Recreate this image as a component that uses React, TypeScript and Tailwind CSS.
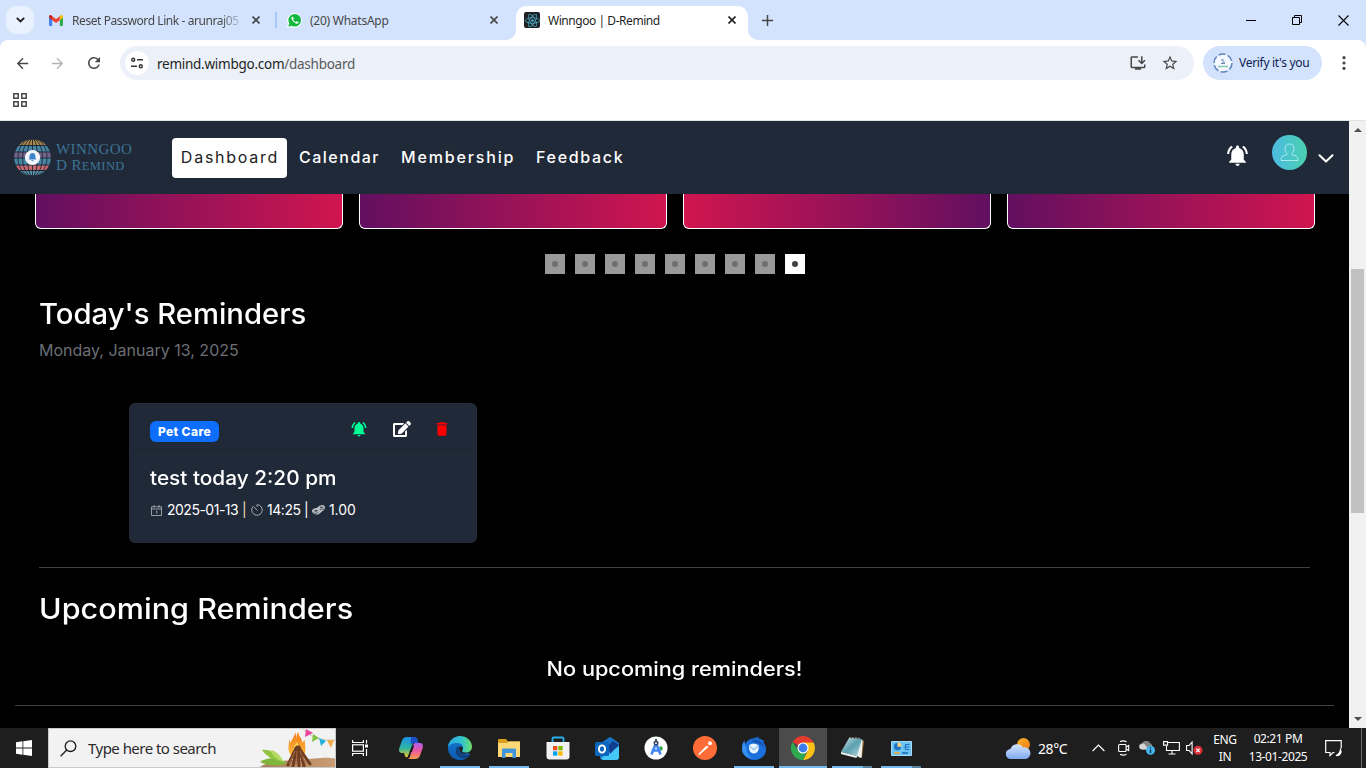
import React from "react";
import {
  MdArrowBack,
  MdArrowForward,
  MdDelete,
  MdInstallDesktop,
  MdNotificationsActive,
  MdRefresh,
  MdStarOutline,
} from "react-icons/md";
import { FaEdit, FaReact } from "react-icons/fa";

/* ---------- small drawings ---------- */

function Cross({ className = "" }: { className?: string }) {
  return (
    <svg className={className} width="8" height="8" viewBox="0 0 8 8" fill="none" stroke="currentColor" strokeWidth="1.6">
      <path d="M0.5 0.5L7.5 7.5M7.5 0.5L0.5 7.5" />
    </svg>
  );
}

function GmailIcon() {
  return (
    <svg width="14" height="11" viewBox="0 0 14 11">
      <path d="M0 2V10a1 1 0 0 0 1 1h2.2V4.5z" fill="#4285f4" />
      <path d="M14 2V10a1 1 0 0 1-1 1h-2.2V4.5z" fill="#34a853" />
      <path d="M10.8 1.2V5.2L14 2.8V1.6C14 .3 12.500-.4 11.500.4z" fill="#fbbc04" />
      <path d="M3.200 5.200V1.200L7 4.100l3.800-2.900v4L7 8z" fill="#ea4335" />
      <path d="M0 1.600V2.800l3.200 2.400V1.200L2.500.4C1.500-.4 0 .3 0 1.600z" fill="#c5221f" />
    </svg>
  );
}

function GlobeLogo() {
  const rows = [
    { y: 0.5, h: 5.5, c: "#b08a4a" },
    { y: 7, h: 5.5, c: "#4686a3" },
    { y: 13.500, h: 5, c: "#77648c" },
    { y: 19.500, h: 6, c: "#4686a3" },
    { y: 26.500, h: 4.5, c: "#c9686f" },
    { y: 32, h: 4.5, c: "#5b93ab" },
  ];
  return (
    <svg width="37" height="37" viewBox="0 0 37 37">
      <defs>
        <clipPath id="globe">
          <circle cx="18.500" cy="18.500" r="18.300" />
        </clipPath>
      </defs>
      <g clipPath="url(#globe)">
        {rows.map((r) => (
          <rect key={r.y} x="0" y={r.y} width="37" height={r.h} fill={r.c} />
        ))}
        <g fill="none" stroke="#202938" strokeWidth=".9">
          <path d="M18.500 0v37" />
          <ellipse cx="18.500" cy="18.500" rx="5" ry="19" />
          <ellipse cx="18.500" cy="18.500" rx="10" ry="19" />
          <ellipse cx="18.500" cy="18.500" rx="14.500" ry="19" />
        </g>
      </g>
      <circle cx="18.500" cy="18.500" r="7.600" fill="#f3f6fa" />
      <path d="M18.500 14c-2 0-2.900 1.500-2.900 3.200 0 2-.5 2.600-1 3.400h7.800c-.5-.8-1-1.400-1-3.400 0-1.700-.9-3.200-2.900-3.200zM17.300 21.300h2.400c0 1.400-2.400 1.400-2.400 0z" fill="#3b86cc" />
    </svg>
  );
}

function Campfire() {
  return (
    <svg width="78" height="40" viewBox="0 0 78 40">
      <defs>
        <linearGradient id="sand" x1="0" x2="1">
          <stop offset="0" stopColor="#a97f5c" />
          <stop offset="1" stopColor="#c99c72" />
        </linearGradient>
        <linearGradient id="flame" x1="0" y1="0" x2="0" y2="1">
          <stop offset="0" stopColor="#f37a1c" />
          <stop offset="1" stopColor="#fdc13a" />
        </linearGradient>
      </defs>
      <path d="M0 40c6-5 14-7 24-8l40-3c6-.4 10 0 14 .5V40z" fill="url(#sand)" />
      <path d="M39 3c-3 6-4 8-6 11 0-2-.5-3-1-4 .5 5-2 9 1 15l4 4h7l4-5c1-5 0-9-.500-13l-2.500 3c1-5-4-6-3.500-11-2 2-2 4-2 6-.7-2-1-4-.5-6z" fill="url(#flame)" />
      <path d="M40 13c-2 4-5 6-4 11h8c2-4-3-6-4-11z" fill="#ffdd55" />
      <path d="M39 19l-8 17M40 18l-4 19M41 19l1 18M42 18l5 19M42 19l11 16" stroke="#6e3d22" strokeWidth="3" strokeLinecap="round" />
      <path d="M38 22l-6 13M40 22l-1 14M43 22l6 14" stroke="#a5653a" strokeWidth="1.100" />
      <path d="M3 33c8-5 17-5 27 1-10 4-19 3-27-1z" fill="#7fb53a" />
      <path d="M5 21c8-1 16 4 21 12C16 31 10 28 5 21z" fill="#8fc442" />
      <path d="M14 21c5 1 9 5 13 12-8-3-12-6-13-12z" fill="#b4db62" />
      <path d="M46 0c8 9 19 12 32 11" fill="none" stroke="#b9a9a0" strokeWidth=".7" />
      <path d="M49 0l7 4-8 4z" fill="#e8459c" />
      <path d="M56 5l6 4-7 4z" fill="#83c440" />
      <path d="M62 9l7 3-5 5z" fill="#24b1dd" />
      <path d="M70 11h7l-3 8z" fill="#f2ac4e" />
    </svg>
  );
}

function Search() {
  return (
    <svg width="17" height="17" viewBox="0 0 17 17" fill="none" stroke="#1c1c1c" strokeWidth="1.300">
      <circle cx="10.500" cy="6.200" r="5.300" />
      <path d="M6.700 10L.6 16.300" />
    </svg>
  );
}

function TaskView() {
  return (
    <svg width="17" height="16" viewBox="0 0 17 16" fill="none" stroke="#fff" strokeWidth="1.200">
      <path d="M.6 0v2.500h10.800V0M.6 16v-2.500h10.800V16M14.500 0v3.500M14.500 9v7" />
      <rect x=".6" y="4.800" width="10.800" height="6.400" />
      <rect x="13" y="4.500" width="3" height="3" fill="#fff" stroke="none" />
    </svg>
  );
}

function Copilot() {
  return (
    <svg width="24" height="22" viewBox="0 0 24 22">
      <defs>
        <linearGradient id="cpA" x1="0" y1="0" x2="0" y2="1">
          <stop offset="0" stopColor="#1c8fe8" />
          <stop offset=".55" stopColor="#2fb6a0" />
          <stop offset="1" stopColor="#f4c626" />
        </linearGradient>
        <linearGradient id="cpB" x1="0" y1="0" x2="0" y2="1">
          <stop offset="0" stopColor="#b05cf0" />
          <stop offset=".5" stopColor="#ee5a9b" />
          <stop offset="1" stopColor="#fb9a4b" />
        </linearGradient>
      </defs>
      <path d="M8 0h7c2 0 3 1 3.500 3l.8 3H14L9 19C8.500 20.500 7 21 6 19l-1-3H3c-3 0-3.500-2.500-2.500-5.500L3 3.500C4 1 5.500 0 8 0z" fill="url(#cpA)" />
      <path d="M12 0h3c2 0 3 1 3.500 3l.8 3H14c-1.500 0-2 1-2.500 2L12 0z" fill="#1b50c8" />
      <path d="M16 6h5c3 0 3.500 2.500 2.500 5.500L21 18.500C20 21 18.500 22 16 22H8.500c1.500 0 2-1 2.500-2.500L14 9c.4-2 1-3 2-3z" fill="url(#cpB)" />
      <path d="M13.500 8L10.500 15h2.500l2-6z" fill="#1e1e1e" />
    </svg>
  );
}

function Edge() {
  return (
    <svg width="24" height="24" viewBox="0 0 24 24">
      <defs>
        <linearGradient id="edA" x1="0" x2="1">
          <stop offset="0" stopColor="#2aa7e6" />
          <stop offset=".6" stopColor="#34c5c8" />
          <stop offset="1" stopColor="#6be06a" />
        </linearGradient>
        <linearGradient id="edB" x1="0" y1="0" x2="0" y2="1">
          <stop offset="0" stopColor="#1378cf" />
          <stop offset="1" stopColor="#0d59ad" />
        </linearGradient>
      </defs>
      <path d="M0 12C0 5 5 2 12 2l4 8-1 6 7.500 2A12 12 0 0 1 0 12z" fill="url(#edB)" />
      <path d="M0 12C0 5 5.500 0 12 0s12 5 12 10.500c0 4-3 6-6 6-2.500 0-4-.8-4-1.700 0-.7 1-1 1-3C15 9 12.500 7 9 7 4 7 0 9.500 0 12z" fill="url(#edA)" />
      <path d="M9 11c-3 5 0 11 7 11 3 0 5-2 6.500-4-4 2-9 1.500-11-1.500-1.500-2-1-4 0-5.500-1-.5-2-.5-2.500 0z" fill="#123e78" />
      <path d="M11.500 11c1.500-1 3.500 0 3.500 1.200 0 1-1 1.800-1 2.800 0 1.500 2 2.500 5 2.500-4 2-9-1-7.500-6.500z" fill="#1e1e1e" />
    </svg>
  );
}

function Explorer() {
  return (
    <svg width="22" height="19" viewBox="0 0 22 19">
      <path d="M0 1a1 1 0 0 1 1-1h7l2 2.500h12V18H0z" fill="#dd9e1b" />
      <path d="M0 4h9l1.500-1.500H22V18H0z" fill="#ffd977" />
      <path d="M4 10.500a1 1 0 0 1 1-1h12a1 1 0 0 1 1 1V19h-3.500v-5h-7v5H4z" fill="#4095dc" />
    </svg>
  );
}

function Store() {
  return (
    <svg width="24" height="24" viewBox="0 0 24 24">
      <path d="M6.500 7V2.500a1 1 0 0 1 1-1h9a1 1 0 0 1 1 1V7" fill="none" stroke="#27b0e8" strokeWidth="1.800" />
      <path d="M.5 6h23v14.500a3 3 0 0 1-3 3h-17a3 3 0 0 1-3-3z" fill="#f1f1f1" />
      <path d="M7 10h4.300v4.300H7z" fill="#f25022" />
      <path d="M12.300 10h4.300v4.300h-4.300z" fill="#7fba00" />
      <path d="M7 15.300h4.300v4.300H7z" fill="#00a4ef" />
      <path d="M12.300 15.300h4.300v4.300h-4.300z" fill="#ffb900" />
    </svg>
  );
}

function Outlook() {
  return (
    <svg width="24" height="23" viewBox="0 0 24 23">
      <path d="M5 6.500L14 .5c.7-.5 1.500-.5 2.200 0L24 6v14a3 3 0 0 1-3 3H8a3 3 0 0 1-3-3z" fill="#1773c5" />
      <path d="M24 9v11a3 3 0 0 1-3 3H8l-2-2z" fill="#43c8f7" />
      <path d="M13 9l5-5 6 4-9 9z" fill="#103f91" />
      <rect x="0" y="5" width="14" height="14" rx="1.500" fill="#0c65bf" />
      <ellipse cx="7" cy="12" rx="3.100" ry="3.600" fill="none" stroke="#fff" strokeWidth="1.900" />
    </svg>
  );
}

function AndroidStudio() {
  return (
    <svg width="24" height="24" viewBox="0 0 24 24">
      <circle cx="12" cy="12" r="11.500" fill="#fff" />
      <path d="M15 11c3-2 4 0 3.500 3l-2 1z" fill="#31a853" />
      <path d="M12 7L7.500 18.500M12 7l4.500 11.500M7.500 14.500h9" fill="none" stroke="#4285f4" strokeWidth="2.600" />
      <circle cx="12" cy="7" r="2.500" fill="#3c4759" />
      <path d="M12 3v3" stroke="#3c4759" strokeWidth="1.800" />
      <circle cx="12" cy="7.200" r=".9" fill="#fff" />
    </svg>
  );
}

function Postman() {
  return (
    <svg width="24" height="24" viewBox="0 0 24 24">
      <circle cx="12" cy="12" r="12" fill="#ff6c37" />
      <path d="M5 19l2-2.500 6-6.500 2 1.500-7.500 6z" fill="#fff" />
      <path d="M6 18.500l9-8.500" stroke="#fff" strokeWidth="1.200" />
      <circle cx="17" cy="7.300" r="2" fill="#fff" />
      <path d="M14.500 8.800l1.500 1.500" stroke="#ff6c37" strokeWidth=".7" />
    </svg>
  );
}

function Thunderbird() {
  return (
    <svg width="24" height="24" viewBox="0 0 24 24">
      <path d="M2.500 4.500c-.2 2 .7 3.500.7 3.500C5 4.500 8 2.500 12 2.200L17 .5l-1 2c3 .3 5 1.500 6.500 3l-1.500.8c2 2 3 4.500 3 7.200C24 19.500 19 24 12.500 24S0 19 0 13c0-3.500 1-6.500 2.500-8.500z" fill="#1b6fdc" />
      <path d="M2.500 4.500c-.5 3 .5 5 2 7C4 16 6 20 11 22.500 4 21.500 0 18 0 13c0-3 1-6.500 2.500-8.500z" fill="#3592f0" />
      <path d="M9 5c6-3 12 0 13 7-2-3-5-5-8-5z" fill="#1551ad" />
      <path d="M7 9.500c1.500-2 7-2.500 9.500 0 .8 4-.5 8-4.700 8-3.800 0-5.300-4-4.800-8z" fill="#eaf4fd" />
      <path d="M7.300 9.800l4.500 4 4.500-4" fill="none" stroke="#9cc7ee" strokeWidth="1.300" />
    </svg>
  );
}

function Chrome() {
  return (
    <svg width="24" height="24" viewBox="0 0 24 24">
      <path d="M12 12L1.600 6A12 12 0 0 1 22.400 6z" fill="#e33b2e" />
      <path d="M12 6.400h10.600A12 12 0 0 1 12 24l4.900-9.200z" fill="#fbc116" />
      <path d="M12 24A12 12 0 0 1 1.600 6l5.500 8.800 8.900.3z" fill="#2da94f" />
      <circle cx="12" cy="12" r="5.600" fill="#fff" />
      <circle cx="12" cy="12" r="4.400" fill="#3b7ded" />
    </svg>
  );
}

function Notepad() {
  return (
    <svg width="23" height="22" viewBox="0 0 23 22">
      <defs>
        <linearGradient id="np" x1="0" y1="0" x2="1" y2="1">
          <stop offset="0" stopColor="#d2e8eb" />
          <stop offset=".5" stopColor="#5a9fae" />
          <stop offset="1" stopColor="#b9dde2" />
        </linearGradient>
      </defs>
      <path d="M20 3l3 1-2 16-3 1z" fill="#a57c43" />
      <path d="M20 2l1.500 1-1 18-5-2z" fill="#f1f3f2" />
      <path d="M8 1l13 1-5 17-16-4z" fill="url(#np)" />
      <path d="M0 15l16 4-.5 2L0 17z" fill="#edf6f6" />
      <path d="M9 0v2M12 0v2M15 0v2M18 .5v2" stroke="#bbb" strokeWidth="1" />
    </svg>
  );
}

function ControlPanel() {
  return (
    <svg width="21" height="15" viewBox="0 0 21 15">
      <rect width="21" height="15" rx=".8" fill="#a5dcf7" />
      <rect x="1" y="1" width="19" height="13" fill="#6cc4f2" />
      <circle cx="6.500" cy="5.700" r="3.600" fill="#1d74c4" />
      <path d="M6.500 5.700V1.600a4.100 4.100 0 0 1 4.100 4.100z" fill="#ffd27b" />
      <path d="M12.500 6h2.500M15 3.500h3.500M15 6h3.500M15 8.500h3.500M14.500 3v6" fill="none" stroke="#1d74c4" strokeWidth="1" />
      <path d="M3 12h6" stroke="#f7a932" strokeWidth="1.500" />
      <path d="M11 12h6" stroke="#1667b4" strokeWidth="1.500" />
    </svg>
  );
}

function Weather() {
  return (
    <svg width="25" height="21" viewBox="0 0 25 21">
      <defs>
        <linearGradient id="sun" x1="0" y1="0" x2="1" y2="1">
          <stop offset="0" stopColor="#fdb52a" />
          <stop offset="1" stopColor="#ee7416" />
        </linearGradient>
        <linearGradient id="cloud" x1="0" y1="0" x2="0" y2="1">
          <stop offset="0" stopColor="#d6e6ff" />
          <stop offset="1" stopColor="#7fa9f0" />
        </linearGradient>
      </defs>
      <circle cx="17.500" cy="6.500" r="6.500" fill="url(#sun)" />
      <path d="M5 21a5 5 0 0 1-.5-10A7 7 0 0 1 17 9.500a5.500 5.500 0 0 1 3 11.500z" fill="url(#cloud)" />
    </svg>
  );
}

/* ---------- browser chrome ---------- */

function TabStrip() {
  return (
    <div className="flex h-10 bg-[#d3e3fd] text-[12px] leading-[15px] text-[#474747]">
      <div className="ml-1.5 mt-1.5 flex h-7 w-7 shrink-0 items-center justify-center rounded-[10px] bg-[#e9f1fe]">
        <svg width="9" height="6" viewBox="0 0 9 6" fill="none" stroke="#1f1f1f" strokeWidth="1.800">
          <path d="M.8.800l3.700 3.700L8.200.800" />
        </svg>
      </div>
      <div className="ml-[15px] flex w-[226px] items-center">
        <GmailIcon />
        <span className="ml-[9px] w-[168px] overflow-hidden whitespace-nowrap tracking-[-0.42px] [mask-image:linear-gradient(to_right,#000_148px,transparent_172px)]">
          Reset Password Link - arunraj05
        </span>
        <Cross className="ml-[12px]" />
      </div>
      <div className="mt-3 h-4 w-0.5 bg-[#a8c7fa]" />
      <div className="flex w-[239px] items-center">
        <svg className="ml-[10px]" width="15" height="15" viewBox="0 0 15 15">
          <path d="M0 15l1-4A7.300 7.300 0 1 1 4 14z" fill="#fff" />
          <circle cx="7.700" cy="7.300" r="6.300" fill="#12b83f" />
          <path d="M1.300 13.700l1-3.500 2.500 2.600z" fill="#12b83f" />
          <path d="M5.200 3.800c-1.300.8-.8 3 1.300 5s4 2.500 4.900 1.200c.3-.5.200-.9 0-1L9.800 8.200l-.9.900C7.700 8.700 6.500 7.500 6 6.400l.8-.9L6 3.700z" fill="#fff" />
        </svg>
        <span className="ml-2 w-[180px] whitespace-nowrap tracking-[-0.25px]">(20) WhatsApp</span>
        <Cross />
      </div>
      <div className="relative mt-1.5 flex h-[34px] w-[232px] items-center rounded-t-[10px] bg-white text-[#1f1f1f]">
        <svg className="absolute -left-2.5 bottom-0" width="10" height="10" viewBox="0 0 10 10">
          <path d="M10 0v10H0A10 10 0 0 0 10 0z" fill="#fff" />
        </svg>
        <svg className="absolute -right-2.5 bottom-0" width="10" height="10" viewBox="0 0 10 10">
          <path d="M0 0v10h10A10 10 0 0 1 0 0z" fill="#fff" />
        </svg>
        <div className="mb-[6px] ml-2 flex h-4 w-4 items-center justify-center rounded-[2px] bg-[#202124]">
          <FaReact className="text-[#4db5d0]" size={15} />
        </div>
        <span className="mb-[6px] ml-2 w-[180px] whitespace-nowrap tracking-[-0.45px]">Winngoo | D-Remind</span>
        <Cross className="mb-[6px]" />
      </div>
      <svg className="ml-[14px] mt-[15px]" width="11" height="11" viewBox="0 0 11 11" stroke="#474747" strokeWidth="1.500">
        <path d="M5.500 0v11M0 5.500h11" />
      </svg>
      <div className="ml-auto mr-[17px] flex items-center gap-[36px]">
        <svg width="10" height="10" viewBox="0 0 10 10" stroke="#000" strokeWidth="1">
          <path d="M0 5.500h10" />
        </svg>
        <svg width="10" height="10" viewBox="0 0 10 10" stroke="#000" strokeWidth="1" fill="none">
          <path d="M.5 2.500h7v7h-7zM2.500 2.500v-2h7v7h-2" />
        </svg>
        <svg width="11" height="11" viewBox="0 0 11 11" stroke="#000" strokeWidth="1.100">
          <path d="M.5.500l10 10M10.500.500l-10 10" />
        </svg>
      </div>
    </div>
  );
}

function Toolbar() {
  return (
    <div className="bg-[#d3e3fd]">
      <div className="flex h-[46px] items-center rounded-t-[8px] bg-white text-[#474747]">
        <MdArrowBack className="ml-[14px]" size={17} />
        <MdArrowForward className="ml-[18px] text-[#b3b3b3]" size={17} />
        <MdRefresh className="ml-[19px]" size={18} />
        <div className="ml-[17px] flex h-[34px] w-[1074px] items-center rounded-full bg-[#ebf0f9]">
          <div className="ml-[5px] flex h-6 w-6 items-center justify-center rounded-full bg-white">
            <svg width="12" height="12" viewBox="0 0 12 12" fill="none" stroke="#333" strokeWidth="1.400">
              <circle cx="2.200" cy="2.700" r="1.500" />
              <path d="M6 2.700h6M0 9.300h6" />
              <circle cx="9.800" cy="9.300" r="1.500" />
            </svg>
          </div>
          <span className="mt-px ml-2 whitespace-nowrap text-[13.500px] leading-5 tracking-[-0.26px] text-[#1f1f1f]">
            remind.wimbgo.com<span className="text-[#5a5a5a]">/dashboard</span>
          </span>
          <MdInstallDesktop className="ml-auto" size={18} />
          <MdStarOutline className="ml-[14px] mr-[15px]" size={18} />
        </div>
        <div className="ml-[9px] flex h-[34px] w-[119px] items-center rounded-full bg-[#d3e3fd]">
          <svg className="ml-[10px]" width="20" height="20" viewBox="0 0 20 20">
            <circle cx="10" cy="10" r="9" fill="#f4f8ff" stroke="#5e83bd" strokeWidth="1.500" strokeDasharray="7 2.400" />
            <path d="M8 7h3M9 9h3M8 10.500h4" stroke="#6884a8" strokeWidth="1" />
            <path d="M5 13.500h10" stroke="#8bc7b4" strokeWidth="1.500" />
          </svg>
          <span className="ml-[6px] whitespace-nowrap text-[12px] tracking-[-0.3px] text-[#0b2250]">Verify it's you</span>
        </div>
        <svg className="ml-[20px]" width="4" height="14" viewBox="0 0 4 14" fill="#474747">
          <circle cx="2" cy="1.700" r="1.600" />
          <circle cx="2" cy="7" r="1.600" />
          <circle cx="2" cy="12.300" r="1.600" />
        </svg>
      </div>
      <div className="flex h-[35px] items-start border-b border-[#dfe3df] bg-white pl-[13px] pt-[7px]">
        <svg width="14" height="14" viewBox="0 0 14 14" fill="none" stroke="#474747" strokeWidth="1.500">
          <path d="M.8.800h4.400v4.400H.8zM8.800.800h4.400v4.400H8.800zM.8 8.800h4.400v4.400H.8zM8.800 8.800h4.400v4.400H8.800z" />
        </svg>
      </div>
    </div>
  );
}

/* ---------- page ---------- */

function NavBar() {
  return (
    <nav className="flex h-[73px] shrink-0 items-center bg-[#202938] text-[16px] font-medium text-white">
      <div className="mb-px ml-3.5 flex items-center">
        <GlobeLogo />
        <div className="ml-[5px] w-[80px] font-['Liberation_Serif',serif] font-normal leading-[16px] text-[#3d7395]">
          <div className="whitespace-nowrap text-[15px] tracking-[0.4px]">WINNGOO</div>
          <div className="whitespace-nowrap text-[15px] tracking-[0.4px]">
            D R<span className="text-[12.500px]">EMIND</span>
          </div>
        </div>
      </div>
      <div className="ml-[36px] mt-px flex h-10 w-[115px] items-center justify-center rounded-[4px] bg-white pb-[2px] pl-px font-normal tracking-[1.75px] text-[#222]">
        Dashboard
      </div>
      <div className="ml-[12px] mt-[-1px] flex">
        <span className="w-[102px] tracking-[1.500px]">Calendar</span>
        <span className="w-[135px] tracking-[1.850px]">Membership</span>
        <span className="tracking-[1.700px]">Feedback</span>
      </div>
      <MdNotificationsActive className="ml-auto mr-[22px] mt-[-4px]" size={25} />
      <div className="mt-[-10px] flex h-[35px] w-[35px] items-center justify-center rounded-full bg-linear-to-r from-[#4dbbe2] to-[#4bcfae]">
        <svg width="19" height="19" viewBox="0 0 19 19" fill="none" stroke="#a9ecec" strokeWidth="1">
          <path d="M7 10.200C5.500 9 5 7.500 5 5.500 5 3 6.500 1 9.500 1S14 3 14 5.500c0 2-.5 3.500-2 4.700v1.300l4 1.500c1.500.7 2 2 2 4.500H1c0-2.500.5-3.800 2-4.500l4-1.500z" />
        </svg>
      </div>
      <svg className="ml-[11px] mr-[15px] mt-[2px]" width="16" height="9" viewBox="0 0 16 9" fill="none" stroke="#fff" strokeWidth="2" strokeLinecap="round" strokeLinejoin="round">
        <path d="M1.500 1.200L8 7.500l6.500-6.300" />
      </svg>
    </nav>
  );
}

function ReminderCard() {
  return (
    <div className="ml-[129px] h-[140px] w-[348px] rounded-[6px] border border-[#252d3b] bg-[#202938] px-1 text-white">
      <div className="flex h-[46px] border-b border-[#1b2330] pl-4">
        <span className="mt-[17px] flex h-[21px] w-[69px] items-center justify-center rounded-[6px] bg-[#0d6efd] text-[12px] font-extrabold tracking-[0.400px]">
          Pet Care
        </span>
        <MdNotificationsActive className="ml-[131px] mt-[16px] text-[#00ff94]" size={18} />
        <FaEdit className="ml-[25px] mt-[16px]" size={18} />
        <MdDelete className="ml-[22px] mt-[16px] text-[#ff0000]" size={18} />
      </div>
      <div className="ml-[16px] mt-[16px] w-[200px] origin-left scale-x-[1.040] whitespace-nowrap text-[20px] font-medium leading-6">
        test today 2:20 pm
      </div>
      <div className="mt-[10px] flex h-5 items-center whitespace-nowrap pl-[17px] text-[14px] leading-5">
        <svg width="11" height="11" viewBox="0 0 11 11" fill="none" stroke="#b3b7be" strokeWidth=".8">
          <path d="M.5 1.800h10v8.700H.5zM.5 4h10M3 0v2.500M8 0v2.500M5 6h.8v2.500" />
        </svg>
        <span className="ml-[5px] w-[75px] tracking-[-0.500px]">2025-01-13</span>
        <span className="w-[9px] text-[#f1dfb5]">|</span>
        <svg width="12" height="12" viewBox="0 0 12 12" fill="none" stroke="#b3b7be" strokeWidth=".9">
          <path d="M2.500 2A5.300 5.300 0 1 0 6 .700v2M6.500 6.500L3 3.200" />
        </svg>
        <span className="ml-[4px] w-[37px] tracking-[-0.450px]">14:25</span>
        <span className="w-[8px]">|</span>
        <svg width="13" height="10" viewBox="0 0 13 10">
          <path d="M0 6C0 4 3 3 5 3c1-2 4-3 6-3 2 1 2.500 3 1.500 4.500L7 9C4 10.500 0 9 0 6z" fill="#bfc3c8" />
          <path d="M1 7.500c1.500 1.500 5 1 6-1M7.500 4.500c2 1 4.500 0 5-1.500" fill="none" stroke="#3a4250" strokeWidth=".8" />
          <ellipse cx="9.500" cy="2.500" rx="1.800" ry="1" fill="#4b5361" />
          <ellipse cx="4" cy="5.800" rx="1.800" ry="1" fill="#4b5361" />
        </svg>
        <span className="ml-[4px] tracking-[-0.100px]">1.00</span>
      </div>
    </div>
  );
}

function Page() {
  return (
    <main className="flex h-[607px] w-[1349px] flex-col overflow-hidden bg-black font-[Inter,sans-serif] text-white">
      <NavBar />
      <div className="ml-[35px] flex shrink-0 gap-4">
        {[0, 1, 2, 3].map((i) => (
          <div
            key={i}
            className={`h-[35px] w-[308px] rounded-b-[6px] border border-t-0 border-white bg-linear-to-r/srgb ${
              i === 2 ? "from-[#d0154f] to-[#620f60]" : "from-[#620f60] to-[#d0154f]"
            }`}
          />
        ))}
      </div>
      <div className="ml-[545px] mt-[25px] flex shrink-0 gap-2.5">
        {Array.from({ length: 9 }, (_, i) => (
          <div key={i} className={`flex h-5 w-5 items-center justify-center ${i === 8 ? "bg-white" : "bg-[#999]"}`}>
            <div className={`h-[6px] w-[6px] rounded-full ${i === 8 ? "bg-[#404040]" : "bg-[#6f6f6f]"}`} />
          </div>
        ))}
      </div>
      <h2 className="ml-[39px] mt-[23px] w-[600px] shrink-0 origin-left scale-x-[1.045] text-[28px] font-medium leading-[34px]">Today's Reminders</h2>
      <p className="ml-[39px] mt-[7px] shrink-0 text-[16px] leading-6 text-[#6c6f75]">Monday, January 13, 2025</p>
      <div className="mt-[41px] shrink-0">
        <ReminderCard />
      </div>
      <hr className="ml-[39px] mt-6 w-[1271px] shrink-0 border-[#404040]" />
      <h2 className="ml-[39px] mt-[24px] w-[600px] shrink-0 origin-left scale-x-[1.09] text-[28px] font-medium leading-[34px] tracking-[0.050px]">Upcoming Reminders</h2>
      <p className="mt-[31px] shrink-0 scale-x-[1.085] text-center text-[20px] font-medium leading-6">No upcoming reminders!</p>
      <hr className="ml-[15px] mt-[24px] w-[1319px] shrink-0 border-[#404040]" />
      <h2 className="ml-[15px] mt-[17px] w-[600px] shrink-0 origin-left scale-x-[1.09] text-[28px] font-medium leading-[34px] tracking-[0.050px]">Completed Reminders</h2>
    </main>
  );
}

function ScrollBar() {
  return (
    <div className="flex h-[607px] w-[17px] flex-col items-center bg-[#f1f1f1]">
      <svg className="mt-[7px]" width="8" height="4" viewBox="0 0 8 4" fill="#505050">
        <path d="M4 0l4 4H0z" />
      </svg>
      <div className="mt-[137px] h-[244px] w-[13px] bg-[#c1c1c1]" />
      <svg className="mb-[7px] mt-auto" width="8" height="4" viewBox="0 0 8 4" fill="#505050">
        <path d="M0 0h8L4 4z" />
      </svg>
    </div>
  );
}

/* ---------- taskbar ---------- */

function TaskButton({ children, state = "" }: { children: React.ReactNode; state?: "" | "open" | "active" | "multi" }) {
  return (
    <div className={`flex h-10 w-12 flex-col items-center ${state === "active" ? "bg-[#4b4b4b]" : ""}`}>
      <div className="flex h-[38px] items-center justify-center pt-0.5">{children}</div>
      {state === "open" && <div className="h-0.5 w-10 bg-[#76b9ed]" />}
      {state === "active" && <div className="h-0.5 w-12 bg-[#76b9ed]" />}
      {state === "multi" && (
        <div className="flex h-0.5 w-10">
          <div className="w-[31px] bg-[#76b9ed]" />
          <div className="w-[9px] bg-[#56819f]" />
        </div>
      )}
    </div>
  );
}

function Taskbar() {
  return (
    <div className="flex h-10 bg-[#1e1e1e] text-white">
      <div className="flex w-12 items-center justify-center">
        <svg width="16" height="16" viewBox="0 0 16 16" fill="#fff">
          <path d="M0 2.200L6.500 1.300V7.600H0zM7.300 1.200L16 0V7.600H7.300zM0 8.400h6.500v6.300L0 13.800zM7.300 8.400H16V16l-8.700-1.200z" />
        </svg>
      </div>
      <div className="flex w-[288px] items-center border border-[#c9c9c9] bg-[#f2f2f2] pl-[11px]">
        <Search />
        <span className="ml-[11px] whitespace-nowrap text-[15px] tracking-[-0.530px] text-[#2b2b2b]">Type here to search</span>
        <div className="ml-auto h-[38px] overflow-hidden">
          <Campfire />
        </div>
      </div>
      <div className="flex gap-px">
        <TaskButton><TaskView /></TaskButton>
        <div className="ml-0.5"><TaskButton><Copilot /></TaskButton></div>
        <TaskButton state="open"><Edge /></TaskButton>
        <TaskButton state="open"><Explorer /></TaskButton>
        <TaskButton><Store /></TaskButton>
        <TaskButton><Outlook /></TaskButton>
        <TaskButton><AndroidStudio /></TaskButton>
        <TaskButton><Postman /></TaskButton>
        <TaskButton state="open"><Thunderbird /></TaskButton>
        <TaskButton state="active"><Chrome /></TaskButton>
        <TaskButton state="multi"><Notepad /></TaskButton>
        <TaskButton state="multi"><ControlPanel /></TaskButton>
      </div>
      <div className="ml-auto flex items-center">
        <Weather />
        <span className="ml-[7px] w-[54px] text-[14px] tracking-[-0.400px]">28°C</span>
        <svg width="13" height="8" viewBox="0 0 13 8" fill="none" stroke="#fff" strokeWidth="1.200">
          <path d="M.6 7l5.900-6 5.900 6" />
        </svg>
        <svg className="ml-[13px]" width="12" height="16" viewBox="0 0 12 16" fill="none" stroke="#fff" strokeWidth="1.100">
          <rect x=".6" y="4.500" width="7.500" height="7" rx="1" />
          <path d="M8.100 7l2.600-1.500v5L8.100 9M2 1.800Q5 0 8.500 1.800M2 14.200q3 1.800 6.500 0" />
        </svg>
        <svg className="ml-[9px]" width="16" height="14" viewBox="0 0 16 14">
          <path d="M3 8.500a3 3 0 0 1 0-6A4.500 4.500 0 0 1 11 2a3.500 3.500 0 0 1 0 6.500z" fill="#858585" />
          <path d="M3 8.500a2.800 2.800 0 0 1-.5-5.500C4 2 6 3 7 5l2 3.500z" fill="#d5d5d5" />
          <circle cx="11.500" cy="9.300" r="4.500" fill="#45b8f0" />
          <path d="M11.500 8.500v3.500M11.500 6.300v1.200" stroke="#0d2e45" strokeWidth="1.400" />
        </svg>
        <svg className="ml-[8px]" width="17" height="14" viewBox="0 0 17 14" fill="none" stroke="#fff" strokeWidth="1.100">
          <path d="M5 1.500h11.400v8H3.500V5M.6.600h4v3.500h-4zM9 9.500V13M5.500 13h7" />
        </svg>
        <svg className="ml-[6px]" width="17" height="14" viewBox="0 0 17 14" fill="none" stroke="#fff" strokeWidth="1.100">
          <path d="M.6 4.500h2.500l3-3.500v12l-3-3.500H.600z" />
          <circle cx="12" cy="9.300" r="4.500" fill="#dc3038" stroke="none" />
          <path d="M10.300 7.600l3.400 3.400M13.700 7.600l-3.400 3.400" />
        </svg>
        <div className="ml-[8px] w-[28px] text-center text-[12px] leading-[17px] tracking-[-0.400px]">
          ENG
          <br />
          IN
        </div>
        <div className="ml-[7px] w-[64px] whitespace-nowrap text-center text-[12px] leading-[18px] tracking-[-0.400px]">
          02:21 PM
          <br />
          13-01-2025
        </div>
        <svg className="ml-[15px]" width="18" height="17" viewBox="0 0 18 17" fill="none" stroke="#fff" strokeWidth="1.200">
          <path d="M9.500 12.500H8l-3 3v-3H.7V.700h15.500v7.500" />
          <path d="M15.500 9.500c1.500 3-.5 6.500-4.500 6 2-.8 4-3 4.500-6z" fill="#fff" />
        </svg>
        <div className="ml-[18px] mr-1 h-10 w-px bg-[#6a6a6a]" />
      </div>
    </div>
  );
}

export default function App() {
  return (
    <div className="h-[768px] w-[1366px] overflow-hidden font-['Noto_Sans','Open_Sans',sans-serif]">
      <TabStrip />
      <Toolbar />
      <div className="flex">
        <Page />
        <ScrollBar />
      </div>
      <Taskbar />
    </div>
  );
}
